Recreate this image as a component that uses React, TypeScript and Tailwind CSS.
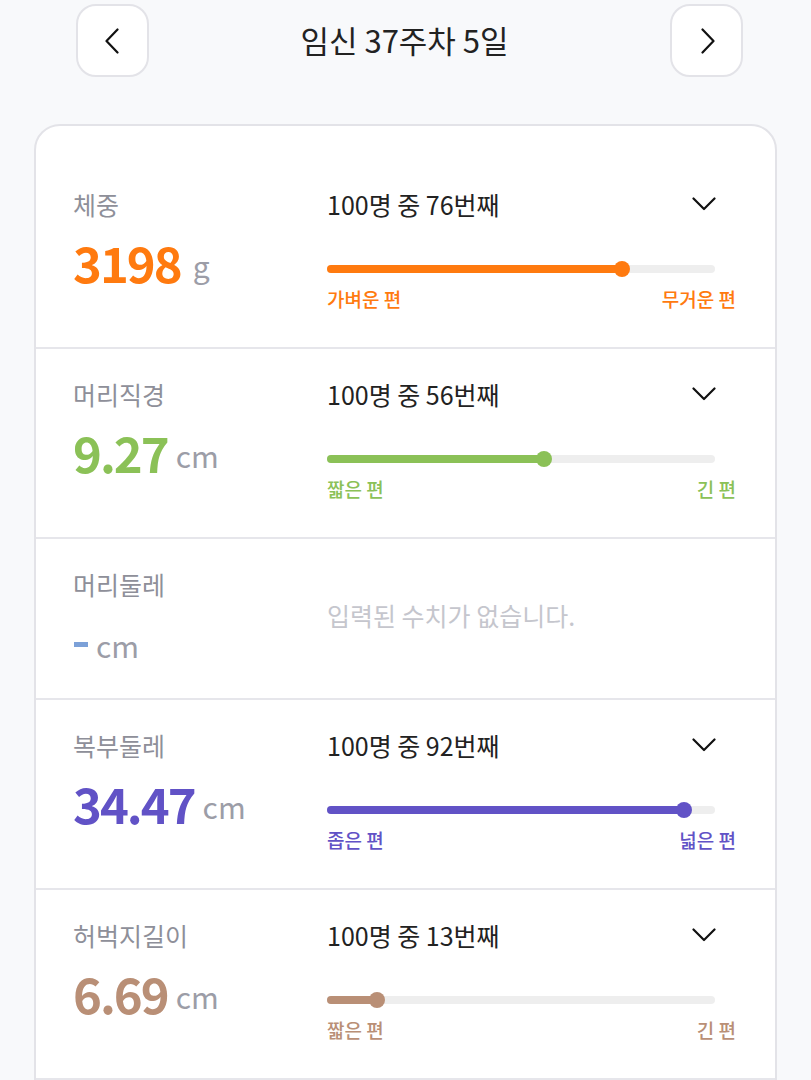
type Metric = {
  label: string;
  value?: string;
  unit: string;
  color: string;
  rank?: number;
  left?: string;
  right?: string;
};

const metrics: Metric[] = [
  { label: "체중", value: "3198", unit: "g", color: "#ff7a0f", rank: 76, left: "가벼운 편", right: "무거운 편" },
  { label: "머리직경", value: "9.27", unit: "cm", color: "#8bc157", rank: 56, left: "짧은 편", right: "긴 편" },
  { label: "머리둘레", unit: "cm", color: "#7ca1d8" },
  { label: "복부둘레", value: "34.47", unit: "cm", color: "#6152c6", rank: 92, left: "좁은 편", right: "넓은 편" },
  { label: "허벅지길이", value: "6.69", unit: "cm", color: "#b98f76", rank: 13, left: "짧은 편", right: "긴 편" },
];

function NavButton({ dir }: { dir: "left" | "right" }) {
  return (
    <button
      type="button"
      className="w-[73px] h-[73px] flex items-center justify-center bg-white border-2 border-[#e3e3e8] rounded-[20px]"
    >
      <svg width="16" height="26" viewBox="0 0 16 26" fill="none">
        <path
          d={dir === "left" ? "M13.5 1.5L2.5 13L13.5 24.5" : "M2.5 1.5L13.5 13L2.5 24.5"}
          stroke="#111"
          strokeWidth="2.2"
          strokeLinecap="round"
          strokeLinejoin="round"
          transform={dir === "left" ? "translate(-1 0)" : "translate(1 0)"}
        />
      </svg>
    </button>
  );
}

function Slider({ pct, color }: { pct: number; color: string }) {
  return (
    <div className="relative h-4 mr-[21px] flex items-center">
      <div className="w-full h-2 rounded-full bg-[#eeeeee]" />
      <div
        className="absolute left-0 h-2 rounded-full"
        style={{ width: `${pct}%`, backgroundColor: color }}
      />
      <div
        className="absolute w-4 h-4 rounded-full -translate-x-1/2"
        style={{ left: `${pct}%`, backgroundColor: color }}
      />
    </div>
  );
}

function MetricRow({ m }: { m: Metric }) {
  return (
    <div className="flex pl-[37px] pr-[39px] pt-[27px] pb-[26px] border-b-2 border-[#e6e6eb]">
      <div className="w-[254px] shrink-0">
        <p className="text-[25px] leading-[36px] text-[#8e8f99]">{m.label}</p>
        <div className="mt-[10px] h-[60px] flex items-center">
          {m.value ? (
            <span
              className="text-[49px] leading-[60px] font-bold tracking-[-2px]"
              style={{ color: m.color }}
            >
              {m.value}
            </span>
          ) : (
            <span className="inline-block w-[14px] h-[5px] mt-[4px] ml-[1px]" style={{ backgroundColor: m.color }} />
          )}
          <span
            className={`${m.unit === "g" ? "ml-[12px]" : "ml-[8px]"} text-[30px] leading-[60px] text-[#9c9da7] mt-[6px]`}
          >
            {m.unit}
          </span>
        </div>
      </div>
      {m.rank !== undefined ? (
        <div className="flex-1 pb-[9px]">
          <div className="flex items-center justify-between">
            <p className="text-[25px] leading-[36px] text-[#222]">100명 중 {m.rank}번째</p>
            <svg width="24" height="14" viewBox="0 0 24 14" fill="none" className="mr-[20px] -mt-[1px]">
              <path d="M1.5 1.5L12 12L22.5 1.5" stroke="#111" strokeWidth="2.2" strokeLinecap="round" strokeLinejoin="round" />
            </svg>
          </div>
          <div className="mt-[39px]">
            <Slider pct={m.rank} color={m.color} />
          </div>
          <div
            className="mt-[9px] flex justify-between text-[19px] leading-[26px] font-medium"
            style={{ color: m.color }}
          >
            <span>{m.left}</span>
            <span>{m.right}</span>
          </div>
        </div>
      ) : (
        <div className="flex-1 self-center -mt-[8px]">
          <p className="text-[25px] leading-[36px] text-[#c5c6cd]">입력된 수치가 없습니다.</p>
        </div>
      )}
    </div>
  );
}

export default function App() {
  return (
    <div
      className="min-h-screen bg-[#f8f9fb] overflow-hidden"
      style={{ fontFamily: '"Noto Sans CJK KR", "Noto Sans", sans-serif' }}
    >
      {/* Header */}
      <div className="flex items-center pt-[4px] pl-[76px] pr-[68px]">
        <NavButton dir="left" />
        <h1 className="flex-1 text-center text-[31px] leading-[40px] text-[#222] pr-[10px] -mt-[1px]">
          임신 37주차 5일
        </h1>
        <NavButton dir="right" />
      </div>

      {/* Card */}
      <div className="mx-[34px] mt-[47px] bg-white border-2 border-[#e3e3e8] rounded-[26px] pt-[33px] pb-[60px]">
        {metrics.map((m) => (
          <MetricRow key={m.label} m={m} />
        ))}
      </div>
    </div>
  );
}
